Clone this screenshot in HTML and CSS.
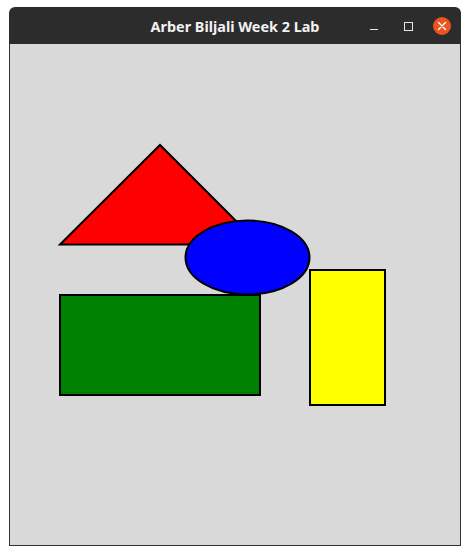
FILE: index.html
```html
<!DOCTYPE html>
<html>
<head>
<meta charset="utf-8">
<link rel="stylesheet" href="styles.css">
</head>
<body>
<div class="window">
  <div class="titlebar">
    <div class="title">Arber Biljali Week 2 Lab</div>
    <div class="controls">
      <span class="btn minimize"><span class="dash"></span></span>
      <span class="btn maximize"><span class="square"></span></span>
      <span class="btn close">
        <svg width="18" height="18" viewBox="0 0 18 18"><circle cx="9" cy="9" r="9" fill="#e95420"/><path d="M5.5 5.5 L12.5 12.5 M12.5 5.5 L5.5 12.5" stroke="#fff" stroke-width="1.4" stroke-linecap="round"/></svg>
      </span>
    </div>
  </div>
  <div class="content">
    <svg class="canvas" width="450" height="501" viewBox="10 44 450 501">
      <polygon points="60,244.5 160,145 259.5,244.5" fill="#ff0000" stroke="#000" stroke-width="2" stroke-linejoin="miter"/>
      <ellipse cx="247.5" cy="257.5" rx="62" ry="37" fill="#0000ff" stroke="#000" stroke-width="2"/>
      <rect x="60" y="295" width="200" height="100" fill="#008000" stroke="#000" stroke-width="2"/>
      <rect x="310" y="270" width="75" height="135" fill="#ffff00" stroke="#000" stroke-width="2"/>
    </svg>
  </div>
</div>
</body>
</html>
```
FILE: styles.css
```css
html, body {
  margin: 0;
  padding: 0;
  background: #ffffff;
}
.window {
  margin: 7px 0 0 9px;
  width: 452px;
  display: flex;
  flex-direction: column;
}
.titlebar {
  height: 37px;
  background: #2c2c2c;
  border-radius: 6px 6px 0 0;
  display: flex;
  align-items: center;
  justify-content: center;
  position: relative;
}
.title {
  font-family: "Noto Sans", "DejaVu Sans", sans-serif;
  font-weight: bold;
  font-size: 14.4px;
  color: #f2f2f2;
  margin-top: 1px;
  margin-left: 0;
}
.controls {
  position: absolute;
  right: 10px;
  top: 10px;
  display: flex;
  align-items: center;
  gap: 0;
}
.btn {
  display: flex;
  align-items: center;
  justify-content: center;
  height: 18px;
}
.minimize {
  width: 8px;
  margin-right: 26px;
}
.dash {
  display: block;
  width: 8px;
  height: 1px;
  background: #e8e8e8;
  margin-top: 6px;
}
.maximize {
  width: 9px;
  margin-right: 20px;
}
.square {
  display: block;
  width: 7px;
  height: 7px;
  border: 1px solid #e8e8e8;
  margin-top: 0;
}
.close {
  width: 18px;
}
.close svg {
  display: block;
}
.content {
  height: 501px;
  background: #d9d9d9;
  border: 1px solid #333333;
  border-top: none;
  display: flex;
}
.canvas {
  display: block;
}
```
